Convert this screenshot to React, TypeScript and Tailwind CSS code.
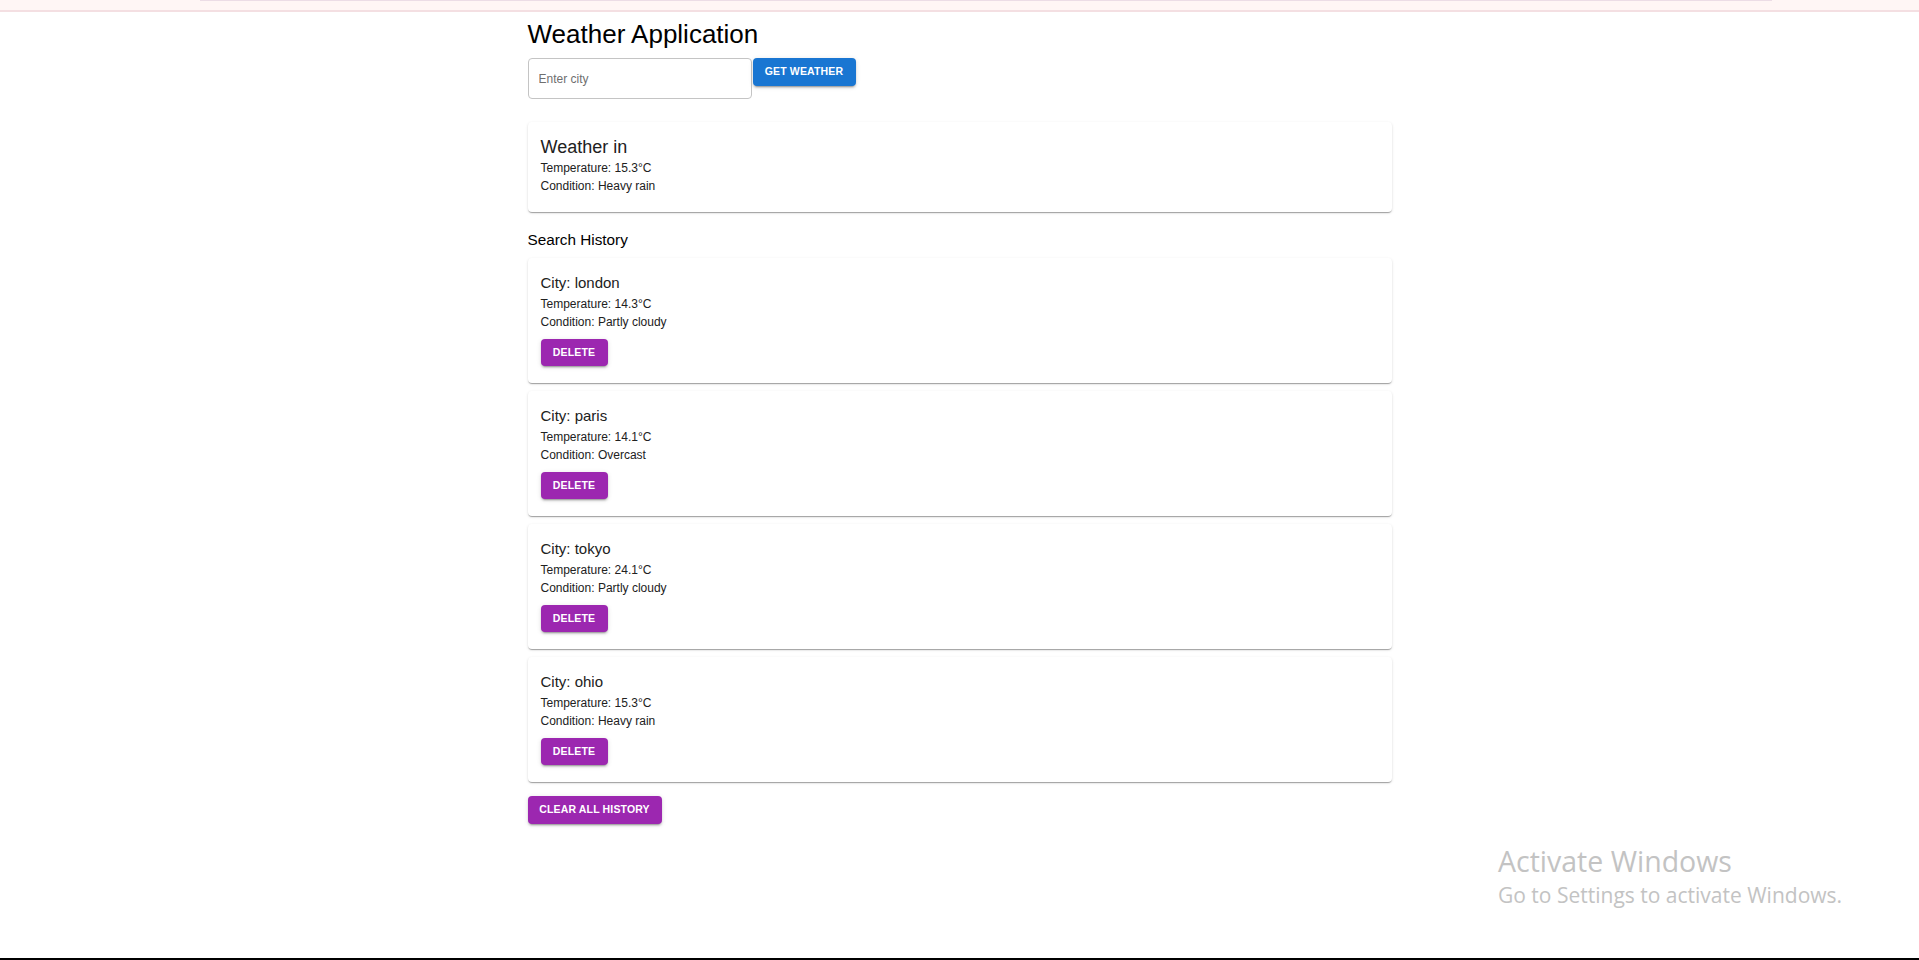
const HISTORY = [
  { city: "london", temp: "14.3", condition: "Partly cloudy" },
  { city: "paris", temp: "14.1", condition: "Overcast" },
  { city: "tokyo", temp: "24.1", condition: "Partly cloudy" },
  { city: "ohio", temp: "15.3", condition: "Heavy rain" },
];

const cardShadow =
  "shadow-[0px_2px_1px_-1px_rgba(0,0,0,0.2),0px_1px_1px_0px_rgba(0,0,0,0.14),0px_1px_3px_0px_rgba(0,0,0,0.12)]";
const buttonBase =
  "flex items-center justify-center whitespace-nowrap rounded-[4px] px-[12px] text-[10.5px] font-bold uppercase tracking-[0.15px] text-white shadow-[0px_3px_1px_-2px_rgba(0,0,0,0.2),0px_2px_2px_0px_rgba(0,0,0,0.14),0px_1px_5px_0px_rgba(0,0,0,0.12)]";

function WeatherLines({ temp, condition }: { temp: string; condition: string }) {
  return (
    <>
      <p className="text-[12px] leading-[18px]">Temperature: {temp}°C</p>
      <p className="text-[12px] leading-[18px]">Condition: {condition}</p>
    </>
  );
}

function HistoryCard({
  city,
  temp,
  condition,
}: {
  city: string;
  temp: string;
  condition: string;
}) {
  return (
    <div className={`rounded-[4px] bg-white px-[13px] pt-[13px] pb-[17px] ${cardShadow}`}>
      <h3 className="text-[15px] leading-[24px]">City: {city}</h3>
      <WeatherLines temp={temp} condition={condition} />
      <button className={`${buttonBase} mt-[8px] h-[27px] w-[67px] bg-[#9c27b0]`}>
        Delete
      </button>
    </div>
  );
}

export default function App() {
  return (
    <div
      className="relative flex h-[960px] flex-col overflow-hidden bg-white text-[#212121]"
      style={{ fontFamily: '"Liberation Sans", Arial, sans-serif' }}
    >
      <div className="h-[12px] shrink-0 border-b-2 border-[#f4dfe2] bg-[#fff6f5]">
        <div className="ml-[200px] h-px w-[1572px] bg-[#ecdde6]" />
      </div>

      <main className="mx-auto w-[864px] flex-1">
        <h1 className="mt-[7px] text-[26px] leading-[30px] text-black">
          Weather Application
        </h1>

        <div className="mt-[9px] flex items-start">
          <input
            type="text"
            placeholder="Enter city"
            className="h-[41px] w-[224px] rounded-[4px] border border-[#c4c4c4] pl-[10px] text-[12px] outline-none placeholder:text-[#6f6f6f]"
          />
          <button className={`${buttonBase} ml-px h-[28px] w-[103px] bg-[#1976d2]`}>
            Get Weather
          </button>
        </div>

        <div className={`mt-[23px] rounded-[4px] bg-white px-[13px] pt-[13px] pb-[17px] ${cardShadow}`}>
          <h2 className="text-[18px] leading-[24px]">Weather in</h2>
          <WeatherLines temp="15.3" condition="Heavy rain" />
        </div>

        <h2 className="mt-[17px] text-[15.3px] leading-[22px] text-black">
          Search History
        </h2>

        <div className="mt-[7px] flex flex-col gap-[8px]">
          {HISTORY.map((item) => (
            <HistoryCard key={item.city} {...item} />
          ))}
        </div>

        <button className={`${buttonBase} mt-[14px] h-[28px] w-[134px] bg-[#9c27b0]`}>
          Clear All History
        </button>
      </main>

      <div className="h-[2px] shrink-0 bg-black" />

      <div
        className="pointer-events-none absolute left-[1498px] top-[844px] text-[#c3c3c3]"
        style={{ fontFamily: '"Open Sans", "Noto Sans", sans-serif' }}
      >
        <p className="text-[28.5px] leading-[34px]">Activate Windows</p>
        <p className="text-[21px] leading-[34px]">Go to Settings to activate Windows.</p>
      </div>
    </div>
  );
}
